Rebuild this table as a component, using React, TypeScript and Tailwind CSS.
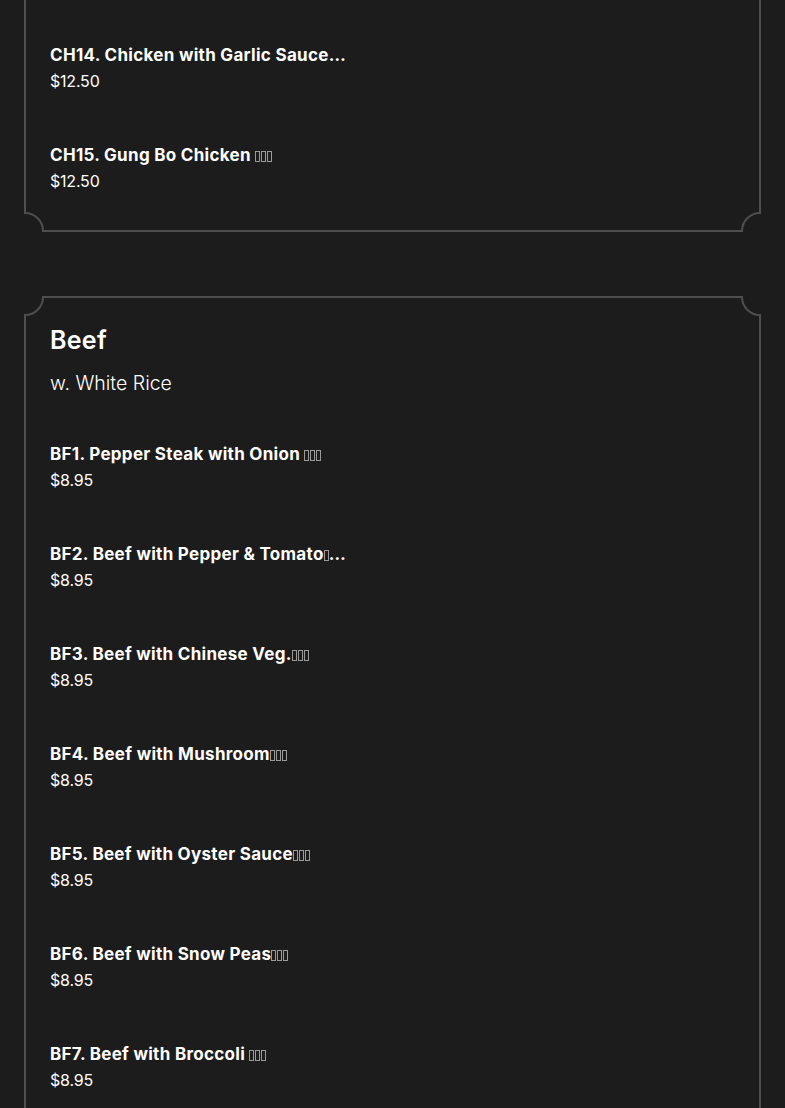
import React from "react";

type Item = { code: string; name: string; tofu: number; spaceBefore?: boolean; cut?: boolean; price: string };

const chicken: Item[] = [
  { code: "CH14", name: "Chicken with Garlic Sauce", tofu: 0, cut: true, price: "$12.50" },
  { code: "CH15", name: "Gung Bo Chicken", tofu: 3, spaceBefore: true, price: "$12.50" },
];

const beef: Item[] = [
  { code: "BF1", name: "Pepper Steak with Onion", tofu: 3, spaceBefore: true, price: "$8.95" },
  { code: "BF2", name: "Beef with Pepper & Tomato", tofu: 1, cut: true, price: "$8.95" },
  { code: "BF3", name: "Beef with Chinese Veg.", tofu: 3, price: "$8.95" },
  { code: "BF4", name: "Beef with Mushroom", tofu: 3, price: "$8.95" },
  { code: "BF5", name: "Beef with Oyster Sauce", tofu: 3, price: "$8.95" },
  { code: "BF6", name: "Beef with Snow Peas", tofu: 3, price: "$8.95" },
  { code: "BF7", name: "Beef with Broccoli", tofu: 3, spaceBefore: true, price: "$8.95" },
];

// missing-glyph boxes, the menu's chinese names never loaded a font
function Tofu({ n }: { n: number }) {
  return (
    <span className="inline-flex gap-[1px] align-[-1px]">
      {Array.from({ length: n }).map((_, i) => (
        <span key={i} className="inline-block w-[5px] h-[11px] border border-[#9a9a9a]" />
      ))}
    </span>
  );
}

function MenuItem({ item }: { item: Item }) {
  return (
    <div className="mb-[48px] last:mb-0">
      <div className="text-[17px] leading-[26px] font-bold tracking-[0.3px] text-white whitespace-nowrap">
        {item.code}. {item.name}
        {item.spaceBefore ? " " : ""}
        {item.tofu > 0 && <Tofu n={item.tofu} />}
        {item.cut && "…"}
      </div>
      <div className="text-[16px] leading-[26px] tracking-[-0.2px] text-white">{item.price}</div>
    </div>
  );
}

function Corner({ pos }: { pos: string }) {
  return <div className={`absolute w-[38px] h-[38px] rounded-full border-2 border-[#4e4e4e] bg-[#1c1c1c] ${pos}`} />;
}

function Card({ children, className = "" }: { children: React.ReactNode; className?: string }) {
  return (
    <div className={`relative overflow-hidden mx-[24px] ${className}`}>
      <div className="border-2 border-[#4e4e4e] px-[24px]">{children}</div>
      <Corner pos="left-[-18px] top-[-18px]" />
      <Corner pos="right-[-18px] top-[-18px]" />
      <Corner pos="left-[-18px] bottom-[-18px]" />
      <Corner pos="right-[-18px] bottom-[-18px]" />
    </div>
  );
}

export default function App() {
  return (
    <div className="min-h-screen bg-[#1c1c1c] overflow-hidden" style={{ fontFamily: "Inter, 'Noto Sans', sans-serif" }}>
      <Card className="mt-[-60px]">
        <div className="pt-[100px] pb-[36px]">
          {chicken.map((it) => (
            <MenuItem key={it.code} item={it} />
          ))}
        </div>
      </Card>

      <Card className="mt-[64px]">
        <div className="pt-[26px] pb-[40px]">
          <h2 className="text-[25px] leading-[32px] font-semibold tracking-[0.3px] text-white">Beef</h2>
          <p className="mt-[13px] text-[19.5px] leading-[28px] font-light text-white">w. White Rice</p>
          <div className="mt-[44px]">
            {beef.map((it) => (
              <MenuItem key={it.code} item={it} />
            ))}
          </div>
        </div>
      </Card>
    </div>
  );
}
